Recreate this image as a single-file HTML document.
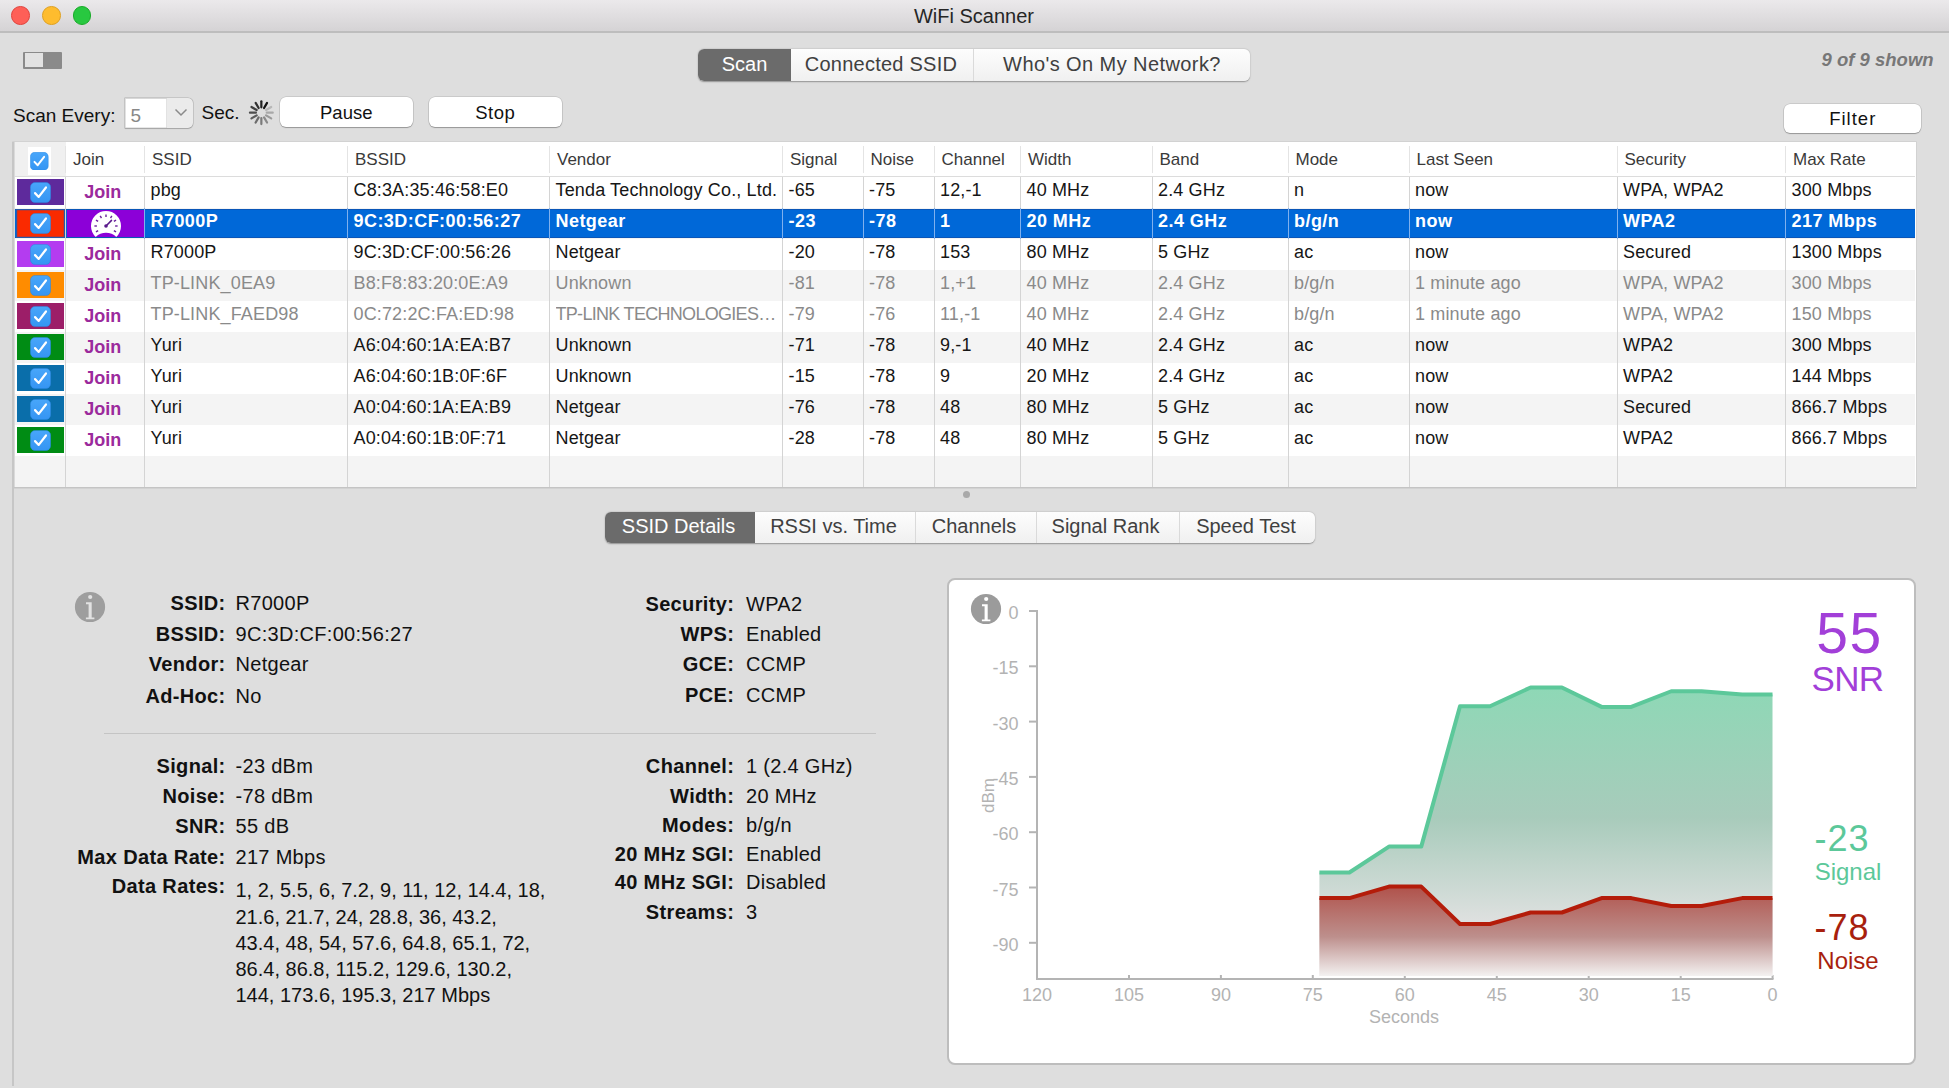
<!DOCTYPE html><html><head><meta charset="utf-8"><style>
*{margin:0;padding:0;box-sizing:border-box}
html,body{width:1949px;height:1088px;overflow:hidden;background:#dedede;font-family:"Liberation Sans",sans-serif;color:#111}
.a{position:absolute}
.t{position:absolute;white-space:pre}
.b{font-weight:bold}
</style></head><body>
<div class="a" style="left:0;top:0;width:1949px;height:33px;background:linear-gradient(#ebe9eb,#d5d3d5);border-bottom:2px solid #bdbdbd"></div>
<div class="a" style="left:11.1px;top:6.1px;width:18.6px;height:18.6px;border-radius:50%;background:#fe5f57;border:0.8px solid #e0443e"></div>
<div class="a" style="left:42.0px;top:6.1px;width:18.6px;height:18.6px;border-radius:50%;background:#febc2e;border:0.8px solid #dea123"></div>
<div class="a" style="left:72.9px;top:6.1px;width:18.6px;height:18.6px;border-radius:50%;background:#28c840;border:0.8px solid #1aab29"></div>
<div class="t" style="left:374.0px;width:1200px;text-align:center;top:6.07px;font-size:20px;line-height:20px;color:#262626">WiFi Scanner</div>
<div class="a" style="left:23px;top:52px;width:39px;height:17px;background:#8a8a8a;border-radius:1px"></div>
<div class="a" style="left:24.6px;top:53.4px;width:18.6px;height:14px;background:#e2e2e2"></div>
<div class="a" style="left:698px;top:49px;width:552px;height:32px;border-radius:6px;background:linear-gradient(#fdfdfd,#f0f0f0);box-shadow:0 0.5px 1.5px rgba(0,0,0,0.35)"></div>
<div class="a" style="left:698px;top:49px;width:93px;height:32px;border-radius:6px 0 0 6px;background:#6b6b6b"></div>
<div class="a" style="left:973px;top:49px;width:1px;height:32px;background:#dadada"></div>
<div class="t" style="left:144.5px;width:1200px;text-align:center;top:54.07px;font-size:20px;line-height:20px;color:#fff">Scan</div>
<div class="t" style="left:281.0px;width:1200px;text-align:center;top:54.07px;font-size:20px;line-height:20px;color:#404040;letter-spacing:0.24px">Connected SSID</div>
<div class="t" style="left:512.0px;width:1200px;text-align:center;top:54.07px;font-size:20px;line-height:20px;color:#404040;letter-spacing:0.42px">Who's On My Network?</div>
<div class="t" style="left:733.5999999999999px;width:1200px;text-align:right;top:51.04px;font-size:18.5px;line-height:18.5px;color:#777;font-weight:bold;font-style:italic">9 of 9 shown</div>
<div class="t" style="left:13px;top:106.22px;font-size:19px;line-height:19px;color:#111">Scan Every:</div>
<div class="a" style="left:125px;top:98px;width:68px;height:29.5px;border-radius:0 5px 5px 0;background:#ebebeb;box-shadow:0 0 0 0.6px rgba(0,0,0,0.18), 0 0.6px 1px rgba(0,0,0,0.18)"></div>
<div class="a" style="left:125px;top:98px;width:42px;height:29.5px;background:#fff;box-shadow:inset 0 1px 0 #d8d8d8, inset 0 0 0 0.6px #cfcfcf"></div>
<div class="t" style="left:130.5px;top:106.22px;font-size:19px;line-height:19px;color:#888">5</div>
<svg class="a" style="left:172.5px;top:105px" width="16" height="14"><path d="M2.5 4.5 L8 10 L13.5 4.5" fill="none" stroke="#8a8a8a" stroke-width="1.5"/></svg>
<div class="t" style="left:201.5px;top:102.82px;font-size:19px;line-height:19px;color:#111">Sec.</div>
<svg class="a" style="left:0;top:0" width="300" height="140"><line x1="264.05" y1="108.02" x2="267.05" y2="102.83" stroke="rgb(18,18,18)" stroke-width="2.2" stroke-linecap="round"/><line x1="261.35" y1="107.30" x2="261.35" y2="101.30" stroke="rgb(33,33,33)" stroke-width="2.2" stroke-linecap="round"/><line x1="258.65" y1="108.02" x2="255.65" y2="102.83" stroke="rgb(48,48,48)" stroke-width="2.2" stroke-linecap="round"/><line x1="256.67" y1="110.00" x2="251.48" y2="107.00" stroke="rgb(63,63,63)" stroke-width="2.2" stroke-linecap="round"/><line x1="255.95" y1="112.70" x2="249.95" y2="112.70" stroke="rgb(78,78,78)" stroke-width="2.2" stroke-linecap="round"/><line x1="256.67" y1="115.40" x2="251.48" y2="118.40" stroke="rgb(93,93,93)" stroke-width="2.2" stroke-linecap="round"/><line x1="258.65" y1="117.38" x2="255.65" y2="122.57" stroke="rgb(108,108,108)" stroke-width="2.2" stroke-linecap="round"/><line x1="261.35" y1="118.10" x2="261.35" y2="124.10" stroke="rgb(123,123,123)" stroke-width="2.2" stroke-linecap="round"/><line x1="264.05" y1="117.38" x2="267.05" y2="122.57" stroke="rgb(138,138,138)" stroke-width="2.2" stroke-linecap="round"/><line x1="266.03" y1="115.40" x2="271.22" y2="118.40" stroke="rgb(153,153,153)" stroke-width="2.2" stroke-linecap="round"/><line x1="266.75" y1="112.70" x2="272.75" y2="112.70" stroke="rgb(168,168,168)" stroke-width="2.2" stroke-linecap="round"/><line x1="266.03" y1="110.00" x2="271.22" y2="107.00" stroke="rgb(183,183,183)" stroke-width="2.2" stroke-linecap="round"/></svg>
<div class="a" style="left:279.5px;top:97px;width:133.5px;height:30px;border-radius:6px;background:#fff;box-shadow:0 0 0 0.5px rgba(0,0,0,0.18), 0 1px 1px rgba(0,0,0,0.25)"></div>
<div class="t" style="left:-253.75px;width:1200px;text-align:center;top:103.74px;font-size:18.5px;line-height:18.5px;color:#111;letter-spacing:0px">Pause</div>
<div class="a" style="left:428.5px;top:97px;width:133.0px;height:30px;border-radius:6px;background:#fff;box-shadow:0 0 0 0.5px rgba(0,0,0,0.18), 0 1px 1px rgba(0,0,0,0.25)"></div>
<div class="t" style="left:-104.75px;width:1200px;text-align:center;top:103.74px;font-size:18.5px;line-height:18.5px;color:#111;letter-spacing:0.5px">Stop</div>
<div class="a" style="left:1783.5px;top:103.5px;width:137.5px;height:29.5px;border-radius:6px;background:#fff;box-shadow:0 0 0 0.5px rgba(0,0,0,0.18), 0 1px 1px rgba(0,0,0,0.25)"></div>
<div class="t" style="left:1252.75px;width:1200px;text-align:center;top:109.54px;font-size:18.5px;line-height:18.5px;color:#111;letter-spacing:1px">Filter</div>
<div class="a" style="left:13px;top:142px;width:1903px;height:345.5px;background:#fff;box-shadow:0 0 0 0.7px #cdcdcd"></div>
<div class="a" style="left:15px;top:142px;width:50.5px;height:35px;background:#f0f0f0"></div>
<div class="a" style="left:28px;top:146.5px;width:23px;height:28px;background:#fff"></div>
<div class="a" style="left:14px;top:176px;width:1901px;height:1px;background:#dcdcdc"></div>
<div class="a" style="left:14px;top:177px;width:1901px;height:31px;background:#ffffff"></div>
<div class="a" style="left:14px;top:208px;width:1901px;height:31px;background:#f4f4f4"></div>
<div class="a" style="left:14px;top:209px;width:1901px;height:29px;background:#0068d8;box-shadow:inset 0 1px 0 #0a56b8, inset 0 -1px 0 #0a56b8"></div>
<div class="a" style="left:14px;top:239px;width:1901px;height:31px;background:#ffffff"></div>
<div class="a" style="left:14px;top:270px;width:1901px;height:31px;background:#f4f4f4"></div>
<div class="a" style="left:14px;top:301px;width:1901px;height:31px;background:#ffffff"></div>
<div class="a" style="left:14px;top:332px;width:1901px;height:31px;background:#f4f4f4"></div>
<div class="a" style="left:14px;top:363px;width:1901px;height:31px;background:#ffffff"></div>
<div class="a" style="left:14px;top:394px;width:1901px;height:31px;background:#f4f4f4"></div>
<div class="a" style="left:14px;top:425px;width:1901px;height:31px;background:#ffffff"></div>
<div class="a" style="left:14px;top:456px;width:1901px;height:31px;background:#f4f4f4"></div>
<div class="a" style="left:65.0px;top:177px;width:1px;height:310.5px;background:#d4d4d4"></div>
<div class="a" style="left:65.0px;top:146px;width:1px;height:27px;background:#e4e4e4"></div>
<div class="a" style="left:144.0px;top:177px;width:1px;height:310.5px;background:#d4d4d4"></div>
<div class="a" style="left:144.0px;top:146px;width:1px;height:27px;background:#e4e4e4"></div>
<div class="a" style="left:347.0px;top:177px;width:1px;height:310.5px;background:#d4d4d4"></div>
<div class="a" style="left:347.0px;top:146px;width:1px;height:27px;background:#e4e4e4"></div>
<div class="a" style="left:549.0px;top:177px;width:1px;height:310.5px;background:#d4d4d4"></div>
<div class="a" style="left:549.0px;top:146px;width:1px;height:27px;background:#e4e4e4"></div>
<div class="a" style="left:782.0px;top:177px;width:1px;height:310.5px;background:#d4d4d4"></div>
<div class="a" style="left:782.0px;top:146px;width:1px;height:27px;background:#e4e4e4"></div>
<div class="a" style="left:862.5px;top:177px;width:1px;height:310.5px;background:#d4d4d4"></div>
<div class="a" style="left:862.5px;top:146px;width:1px;height:27px;background:#e4e4e4"></div>
<div class="a" style="left:933.5px;top:177px;width:1px;height:310.5px;background:#d4d4d4"></div>
<div class="a" style="left:933.5px;top:146px;width:1px;height:27px;background:#e4e4e4"></div>
<div class="a" style="left:1020.0px;top:177px;width:1px;height:310.5px;background:#d4d4d4"></div>
<div class="a" style="left:1020.0px;top:146px;width:1px;height:27px;background:#e4e4e4"></div>
<div class="a" style="left:1151.5px;top:177px;width:1px;height:310.5px;background:#d4d4d4"></div>
<div class="a" style="left:1151.5px;top:146px;width:1px;height:27px;background:#e4e4e4"></div>
<div class="a" style="left:1287.5px;top:177px;width:1px;height:310.5px;background:#d4d4d4"></div>
<div class="a" style="left:1287.5px;top:146px;width:1px;height:27px;background:#e4e4e4"></div>
<div class="a" style="left:1408.5px;top:177px;width:1px;height:310.5px;background:#d4d4d4"></div>
<div class="a" style="left:1408.5px;top:146px;width:1px;height:27px;background:#e4e4e4"></div>
<div class="a" style="left:1616.5px;top:177px;width:1px;height:310.5px;background:#d4d4d4"></div>
<div class="a" style="left:1616.5px;top:146px;width:1px;height:27px;background:#e4e4e4"></div>
<div class="a" style="left:1785.0px;top:177px;width:1px;height:310.5px;background:#d4d4d4"></div>
<div class="a" style="left:1785.0px;top:146px;width:1px;height:27px;background:#e4e4e4"></div>
<div class="a" style="left:144.0px;top:208px;width:1px;height:31px;background:#7fb0ee"></div>
<div class="a" style="left:347.0px;top:208px;width:1px;height:31px;background:#7fb0ee"></div>
<div class="a" style="left:549.0px;top:208px;width:1px;height:31px;background:#7fb0ee"></div>
<div class="a" style="left:782.0px;top:208px;width:1px;height:31px;background:#7fb0ee"></div>
<div class="a" style="left:862.5px;top:208px;width:1px;height:31px;background:#7fb0ee"></div>
<div class="a" style="left:933.5px;top:208px;width:1px;height:31px;background:#7fb0ee"></div>
<div class="a" style="left:1020.0px;top:208px;width:1px;height:31px;background:#7fb0ee"></div>
<div class="a" style="left:1151.5px;top:208px;width:1px;height:31px;background:#7fb0ee"></div>
<div class="a" style="left:1287.5px;top:208px;width:1px;height:31px;background:#7fb0ee"></div>
<div class="a" style="left:1408.5px;top:208px;width:1px;height:31px;background:#7fb0ee"></div>
<div class="a" style="left:1616.5px;top:208px;width:1px;height:31px;background:#7fb0ee"></div>
<div class="a" style="left:1785.0px;top:208px;width:1px;height:31px;background:#7fb0ee"></div>
<svg class="a" style="left:29.999999999999996px;top:151.5px" width="18.6" height="18.6" viewBox="0 0 20 20"><defs><linearGradient id="cbg" x1="0" y1="0" x2="0" y2="1"><stop offset="0" stop-color="#48a6fa"/><stop offset="1" stop-color="#3595f3"/></linearGradient></defs><rect x="0.4" y="0.4" width="19.2" height="19.2" rx="4.6" fill="url(#cbg)" stroke="#2a86e0" stroke-width="0.5"/><path d="M4.8 10.6 L8.3 14.2 L15.2 5.2" fill="none" stroke="#fff" stroke-width="2.1" stroke-linecap="round" stroke-linejoin="round"/></svg>
<div class="t" style="left:73.0px;top:150.61px;font-size:17px;line-height:17px;color:#3a3a3a">Join</div>
<div class="t" style="left:152.0px;top:150.61px;font-size:17px;line-height:17px;color:#3a3a3a">SSID</div>
<div class="t" style="left:355.0px;top:150.61px;font-size:17px;line-height:17px;color:#3a3a3a">BSSID</div>
<div class="t" style="left:557.0px;top:150.61px;font-size:17px;line-height:17px;color:#3a3a3a">Vendor</div>
<div class="t" style="left:790.0px;top:150.61px;font-size:17px;line-height:17px;color:#3a3a3a">Signal</div>
<div class="t" style="left:870.5px;top:150.61px;font-size:17px;line-height:17px;color:#3a3a3a">Noise</div>
<div class="t" style="left:941.5px;top:150.61px;font-size:17px;line-height:17px;color:#3a3a3a">Channel</div>
<div class="t" style="left:1028.0px;top:150.61px;font-size:17px;line-height:17px;color:#3a3a3a">Width</div>
<div class="t" style="left:1159.5px;top:150.61px;font-size:17px;line-height:17px;color:#3a3a3a">Band</div>
<div class="t" style="left:1295.5px;top:150.61px;font-size:17px;line-height:17px;color:#3a3a3a">Mode</div>
<div class="t" style="left:1416.5px;top:150.61px;font-size:17px;line-height:17px;color:#3a3a3a">Last Seen</div>
<div class="t" style="left:1624.5px;top:150.61px;font-size:17px;line-height:17px;color:#3a3a3a">Security</div>
<div class="t" style="left:1793.0px;top:150.61px;font-size:17px;line-height:17px;color:#3a3a3a">Max Rate</div>
<div class="a" style="left:17px;top:179px;width:46.5px;height:26px;background:#5e2a9c"></div>
<svg class="a" style="left:29.799999999999997px;top:182.1px" width="21" height="21" viewBox="0 0 20 20"><defs><linearGradient id="cbg" x1="0" y1="0" x2="0" y2="1"><stop offset="0" stop-color="#48a6fa"/><stop offset="1" stop-color="#3595f3"/></linearGradient></defs><rect x="0.4" y="0.4" width="19.2" height="19.2" rx="4.6" fill="url(#cbg)" stroke="#2a86e0" stroke-width="0.5"/><path d="M4.8 10.6 L8.3 14.2 L15.2 5.2" fill="none" stroke="#fff" stroke-width="2.1" stroke-linecap="round" stroke-linejoin="round"/></svg>
<div class="t" style="left:2.799999999999997px;width:200px;text-align:center;top:183.06px;font-size:18px;line-height:18px;color:#9b2a9c;font-weight:bold">Join</div>
<div class="t" style="left:150.5px;top:181.06px;font-size:18px;line-height:18px;color:#161616;letter-spacing:0.15px;">pbg</div>
<div class="t" style="left:353.5px;top:181.06px;font-size:18px;line-height:18px;color:#161616;letter-spacing:0.15px;">C8:3A:35:46:58:E0</div>
<div class="t" style="left:555.5px;top:181.06px;font-size:18px;line-height:18px;color:#161616;letter-spacing:0.15px;">Tenda Technology Co., Ltd.</div>
<div class="t" style="left:788.5px;top:181.06px;font-size:18px;line-height:18px;color:#161616;letter-spacing:0.15px;">-65</div>
<div class="t" style="left:869px;top:181.06px;font-size:18px;line-height:18px;color:#161616;letter-spacing:0.15px;">-75</div>
<div class="t" style="left:940px;top:181.06px;font-size:18px;line-height:18px;color:#161616;letter-spacing:0.15px;">12,-1</div>
<div class="t" style="left:1026.5px;top:181.06px;font-size:18px;line-height:18px;color:#161616;letter-spacing:0.15px;">40 MHz</div>
<div class="t" style="left:1158px;top:181.06px;font-size:18px;line-height:18px;color:#161616;letter-spacing:0.15px;">2.4 GHz</div>
<div class="t" style="left:1294px;top:181.06px;font-size:18px;line-height:18px;color:#161616;letter-spacing:0.15px;">n</div>
<div class="t" style="left:1415px;top:181.06px;font-size:18px;line-height:18px;color:#161616;letter-spacing:0.15px;">now</div>
<div class="t" style="left:1623px;top:181.06px;font-size:18px;line-height:18px;color:#161616;letter-spacing:0.15px;">WPA, WPA2</div>
<div class="t" style="left:1791.5px;top:181.06px;font-size:18px;line-height:18px;color:#161616;letter-spacing:0.15px;">300 Mbps</div>
<div class="a" style="left:15.5px;top:209px;width:49.5px;height:29px;background:#fa2a00;box-shadow:inset 0 0 0 1.2px #2a5aa8"></div>
<div class="a" style="left:66.5px;top:209.6px;width:77px;height:27.8px;background:#8c00d8"></div>
<svg class="a" style="left:29.799999999999997px;top:213.1px" width="21" height="21" viewBox="0 0 20 20"><defs><linearGradient id="cbg" x1="0" y1="0" x2="0" y2="1"><stop offset="0" stop-color="#48a6fa"/><stop offset="1" stop-color="#3595f3"/></linearGradient></defs><rect x="0.4" y="0.4" width="19.2" height="19.2" rx="4.6" fill="url(#cbg)" stroke="#2a86e0" stroke-width="0.5"/><path d="M4.8 10.6 L8.3 14.2 L15.2 5.2" fill="none" stroke="#fff" stroke-width="2.1" stroke-linecap="round" stroke-linejoin="round"/></svg>
<svg class="a" style="left:85.9px;top:205.9px" width="40" height="40"><path d="M9.7 30.9 A15 15 0 1 1 30.3 30.9 A15 15 0 0 0 9.7 30.9 Z" fill="#fff"/><line x1="12.12" y1="24.55" x2="9.95" y2="25.80" stroke="#6a1f9c" stroke-width="1.4"/><line x1="10.90" y1="20.00" x2="8.40" y2="20.00" stroke="#6a1f9c" stroke-width="1.4"/><line x1="12.12" y1="15.45" x2="9.95" y2="14.20" stroke="#6a1f9c" stroke-width="1.4"/><line x1="15.45" y1="12.12" x2="14.20" y2="9.95" stroke="#6a1f9c" stroke-width="1.4"/><line x1="20.00" y1="10.90" x2="20.00" y2="8.40" stroke="#6a1f9c" stroke-width="1.4"/><line x1="24.55" y1="12.12" x2="25.80" y2="9.95" stroke="#6a1f9c" stroke-width="1.4"/><line x1="27.88" y1="15.45" x2="30.05" y2="14.20" stroke="#6a1f9c" stroke-width="1.4"/><line x1="29.10" y1="20.00" x2="31.60" y2="20.00" stroke="#6a1f9c" stroke-width="1.4"/><line x1="27.88" y1="24.55" x2="30.05" y2="25.80" stroke="#6a1f9c" stroke-width="1.4"/><line x1="20" y1="20" x2="25.5" y2="14.4" stroke="#5a1a8c" stroke-width="1.5" stroke-linecap="round"/><circle cx="20" cy="20" r="1.8" fill="#5a1a8c"/></svg>
<div class="t" style="left:150.5px;top:212.06px;font-size:18px;line-height:18px;color:#fff;font-weight:bold;letter-spacing:0.45px;">R7000P</div>
<div class="t" style="left:353.5px;top:212.06px;font-size:18px;line-height:18px;color:#fff;font-weight:bold;letter-spacing:0.45px;">9C:3D:CF:00:56:27</div>
<div class="t" style="left:555.5px;top:212.06px;font-size:18px;line-height:18px;color:#fff;font-weight:bold;letter-spacing:0.45px;">Netgear</div>
<div class="t" style="left:788.5px;top:212.06px;font-size:18px;line-height:18px;color:#fff;font-weight:bold;letter-spacing:0.45px;">-23</div>
<div class="t" style="left:869px;top:212.06px;font-size:18px;line-height:18px;color:#fff;font-weight:bold;letter-spacing:0.45px;">-78</div>
<div class="t" style="left:940px;top:212.06px;font-size:18px;line-height:18px;color:#fff;font-weight:bold;letter-spacing:0.45px;">1</div>
<div class="t" style="left:1026.5px;top:212.06px;font-size:18px;line-height:18px;color:#fff;font-weight:bold;letter-spacing:0.45px;">20 MHz</div>
<div class="t" style="left:1158px;top:212.06px;font-size:18px;line-height:18px;color:#fff;font-weight:bold;letter-spacing:0.45px;">2.4 GHz</div>
<div class="t" style="left:1294px;top:212.06px;font-size:18px;line-height:18px;color:#fff;font-weight:bold;letter-spacing:0.45px;">b/g/n</div>
<div class="t" style="left:1415px;top:212.06px;font-size:18px;line-height:18px;color:#fff;font-weight:bold;letter-spacing:0.45px;">now</div>
<div class="t" style="left:1623px;top:212.06px;font-size:18px;line-height:18px;color:#fff;font-weight:bold;letter-spacing:0.45px;">WPA2</div>
<div class="t" style="left:1791.5px;top:212.06px;font-size:18px;line-height:18px;color:#fff;font-weight:bold;letter-spacing:0.45px;">217 Mbps</div>
<div class="a" style="left:17px;top:241px;width:46.5px;height:26px;background:#b43cf0"></div>
<svg class="a" style="left:29.799999999999997px;top:244.1px" width="21" height="21" viewBox="0 0 20 20"><defs><linearGradient id="cbg" x1="0" y1="0" x2="0" y2="1"><stop offset="0" stop-color="#48a6fa"/><stop offset="1" stop-color="#3595f3"/></linearGradient></defs><rect x="0.4" y="0.4" width="19.2" height="19.2" rx="4.6" fill="url(#cbg)" stroke="#2a86e0" stroke-width="0.5"/><path d="M4.8 10.6 L8.3 14.2 L15.2 5.2" fill="none" stroke="#fff" stroke-width="2.1" stroke-linecap="round" stroke-linejoin="round"/></svg>
<div class="t" style="left:2.799999999999997px;width:200px;text-align:center;top:245.06px;font-size:18px;line-height:18px;color:#9b2a9c;font-weight:bold">Join</div>
<div class="t" style="left:150.5px;top:243.06px;font-size:18px;line-height:18px;color:#161616;letter-spacing:0.15px;">R7000P</div>
<div class="t" style="left:353.5px;top:243.06px;font-size:18px;line-height:18px;color:#161616;letter-spacing:0.15px;">9C:3D:CF:00:56:26</div>
<div class="t" style="left:555.5px;top:243.06px;font-size:18px;line-height:18px;color:#161616;letter-spacing:0.15px;">Netgear</div>
<div class="t" style="left:788.5px;top:243.06px;font-size:18px;line-height:18px;color:#161616;letter-spacing:0.15px;">-20</div>
<div class="t" style="left:869px;top:243.06px;font-size:18px;line-height:18px;color:#161616;letter-spacing:0.15px;">-78</div>
<div class="t" style="left:940px;top:243.06px;font-size:18px;line-height:18px;color:#161616;letter-spacing:0.15px;">153</div>
<div class="t" style="left:1026.5px;top:243.06px;font-size:18px;line-height:18px;color:#161616;letter-spacing:0.15px;">80 MHz</div>
<div class="t" style="left:1158px;top:243.06px;font-size:18px;line-height:18px;color:#161616;letter-spacing:0.15px;">5 GHz</div>
<div class="t" style="left:1294px;top:243.06px;font-size:18px;line-height:18px;color:#161616;letter-spacing:0.15px;">ac</div>
<div class="t" style="left:1415px;top:243.06px;font-size:18px;line-height:18px;color:#161616;letter-spacing:0.15px;">now</div>
<div class="t" style="left:1623px;top:243.06px;font-size:18px;line-height:18px;color:#161616;letter-spacing:0.15px;">Secured</div>
<div class="t" style="left:1791.5px;top:243.06px;font-size:18px;line-height:18px;color:#161616;letter-spacing:0.15px;">1300 Mbps</div>
<div class="a" style="left:17px;top:272px;width:46.5px;height:26px;background:#ff8c00"></div>
<svg class="a" style="left:29.799999999999997px;top:275.1px" width="21" height="21" viewBox="0 0 20 20"><defs><linearGradient id="cbg" x1="0" y1="0" x2="0" y2="1"><stop offset="0" stop-color="#48a6fa"/><stop offset="1" stop-color="#3595f3"/></linearGradient></defs><rect x="0.4" y="0.4" width="19.2" height="19.2" rx="4.6" fill="url(#cbg)" stroke="#2a86e0" stroke-width="0.5"/><path d="M4.8 10.6 L8.3 14.2 L15.2 5.2" fill="none" stroke="#fff" stroke-width="2.1" stroke-linecap="round" stroke-linejoin="round"/></svg>
<div class="t" style="left:2.799999999999997px;width:200px;text-align:center;top:276.06px;font-size:18px;line-height:18px;color:#9b2a9c;font-weight:bold">Join</div>
<div class="t" style="left:150.5px;top:274.06px;font-size:18px;line-height:18px;color:#8a8a8a;letter-spacing:0.15px;">TP-LINK_0EA9</div>
<div class="t" style="left:353.5px;top:274.06px;font-size:18px;line-height:18px;color:#8a8a8a;letter-spacing:0.15px;">B8:F8:83:20:0E:A9</div>
<div class="t" style="left:555.5px;top:274.06px;font-size:18px;line-height:18px;color:#8a8a8a;letter-spacing:0.15px;">Unknown</div>
<div class="t" style="left:788.5px;top:274.06px;font-size:18px;line-height:18px;color:#8a8a8a;letter-spacing:0.15px;">-81</div>
<div class="t" style="left:869px;top:274.06px;font-size:18px;line-height:18px;color:#8a8a8a;letter-spacing:0.15px;">-78</div>
<div class="t" style="left:940px;top:274.06px;font-size:18px;line-height:18px;color:#8a8a8a;letter-spacing:0.15px;">1,+1</div>
<div class="t" style="left:1026.5px;top:274.06px;font-size:18px;line-height:18px;color:#8a8a8a;letter-spacing:0.15px;">40 MHz</div>
<div class="t" style="left:1158px;top:274.06px;font-size:18px;line-height:18px;color:#8a8a8a;letter-spacing:0.15px;">2.4 GHz</div>
<div class="t" style="left:1294px;top:274.06px;font-size:18px;line-height:18px;color:#8a8a8a;letter-spacing:0.15px;">b/g/n</div>
<div class="t" style="left:1415px;top:274.06px;font-size:18px;line-height:18px;color:#8a8a8a;letter-spacing:0.15px;">1 minute ago</div>
<div class="t" style="left:1623px;top:274.06px;font-size:18px;line-height:18px;color:#8a8a8a;letter-spacing:0.15px;">WPA, WPA2</div>
<div class="t" style="left:1791.5px;top:274.06px;font-size:18px;line-height:18px;color:#8a8a8a;letter-spacing:0.15px;">300 Mbps</div>
<div class="a" style="left:17px;top:303px;width:46.5px;height:26px;background:#9c1e68"></div>
<svg class="a" style="left:29.799999999999997px;top:306.1px" width="21" height="21" viewBox="0 0 20 20"><defs><linearGradient id="cbg" x1="0" y1="0" x2="0" y2="1"><stop offset="0" stop-color="#48a6fa"/><stop offset="1" stop-color="#3595f3"/></linearGradient></defs><rect x="0.4" y="0.4" width="19.2" height="19.2" rx="4.6" fill="url(#cbg)" stroke="#2a86e0" stroke-width="0.5"/><path d="M4.8 10.6 L8.3 14.2 L15.2 5.2" fill="none" stroke="#fff" stroke-width="2.1" stroke-linecap="round" stroke-linejoin="round"/></svg>
<div class="t" style="left:2.799999999999997px;width:200px;text-align:center;top:307.06px;font-size:18px;line-height:18px;color:#9b2a9c;font-weight:bold">Join</div>
<div class="t" style="left:150.5px;top:305.06px;font-size:18px;line-height:18px;color:#8a8a8a;letter-spacing:0.15px;">TP-LINK_FAED98</div>
<div class="t" style="left:353.5px;top:305.06px;font-size:18px;line-height:18px;color:#8a8a8a;letter-spacing:0.15px;">0C:72:2C:FA:ED:98</div>
<div class="t" style="left:555.5px;top:305.06px;font-size:18px;line-height:18px;color:#8a8a8a;letter-spacing:0.15px;width:227.0px;overflow:hidden;letter-spacing:-0.7px;">TP-LINK TECHNOLOGIES…</div>
<div class="t" style="left:788.5px;top:305.06px;font-size:18px;line-height:18px;color:#8a8a8a;letter-spacing:0.15px;">-79</div>
<div class="t" style="left:869px;top:305.06px;font-size:18px;line-height:18px;color:#8a8a8a;letter-spacing:0.15px;">-76</div>
<div class="t" style="left:940px;top:305.06px;font-size:18px;line-height:18px;color:#8a8a8a;letter-spacing:0.15px;">11,-1</div>
<div class="t" style="left:1026.5px;top:305.06px;font-size:18px;line-height:18px;color:#8a8a8a;letter-spacing:0.15px;">40 MHz</div>
<div class="t" style="left:1158px;top:305.06px;font-size:18px;line-height:18px;color:#8a8a8a;letter-spacing:0.15px;">2.4 GHz</div>
<div class="t" style="left:1294px;top:305.06px;font-size:18px;line-height:18px;color:#8a8a8a;letter-spacing:0.15px;">b/g/n</div>
<div class="t" style="left:1415px;top:305.06px;font-size:18px;line-height:18px;color:#8a8a8a;letter-spacing:0.15px;">1 minute ago</div>
<div class="t" style="left:1623px;top:305.06px;font-size:18px;line-height:18px;color:#8a8a8a;letter-spacing:0.15px;">WPA, WPA2</div>
<div class="t" style="left:1791.5px;top:305.06px;font-size:18px;line-height:18px;color:#8a8a8a;letter-spacing:0.15px;">150 Mbps</div>
<div class="a" style="left:17px;top:334px;width:46.5px;height:26px;background:#008c14"></div>
<svg class="a" style="left:29.799999999999997px;top:337.1px" width="21" height="21" viewBox="0 0 20 20"><defs><linearGradient id="cbg" x1="0" y1="0" x2="0" y2="1"><stop offset="0" stop-color="#48a6fa"/><stop offset="1" stop-color="#3595f3"/></linearGradient></defs><rect x="0.4" y="0.4" width="19.2" height="19.2" rx="4.6" fill="url(#cbg)" stroke="#2a86e0" stroke-width="0.5"/><path d="M4.8 10.6 L8.3 14.2 L15.2 5.2" fill="none" stroke="#fff" stroke-width="2.1" stroke-linecap="round" stroke-linejoin="round"/></svg>
<div class="t" style="left:2.799999999999997px;width:200px;text-align:center;top:338.06px;font-size:18px;line-height:18px;color:#9b2a9c;font-weight:bold">Join</div>
<div class="t" style="left:150.5px;top:336.06px;font-size:18px;line-height:18px;color:#161616;letter-spacing:0.15px;">Yuri</div>
<div class="t" style="left:353.5px;top:336.06px;font-size:18px;line-height:18px;color:#161616;letter-spacing:0.15px;">A6:04:60:1A:EA:B7</div>
<div class="t" style="left:555.5px;top:336.06px;font-size:18px;line-height:18px;color:#161616;letter-spacing:0.15px;">Unknown</div>
<div class="t" style="left:788.5px;top:336.06px;font-size:18px;line-height:18px;color:#161616;letter-spacing:0.15px;">-71</div>
<div class="t" style="left:869px;top:336.06px;font-size:18px;line-height:18px;color:#161616;letter-spacing:0.15px;">-78</div>
<div class="t" style="left:940px;top:336.06px;font-size:18px;line-height:18px;color:#161616;letter-spacing:0.15px;">9,-1</div>
<div class="t" style="left:1026.5px;top:336.06px;font-size:18px;line-height:18px;color:#161616;letter-spacing:0.15px;">40 MHz</div>
<div class="t" style="left:1158px;top:336.06px;font-size:18px;line-height:18px;color:#161616;letter-spacing:0.15px;">2.4 GHz</div>
<div class="t" style="left:1294px;top:336.06px;font-size:18px;line-height:18px;color:#161616;letter-spacing:0.15px;">ac</div>
<div class="t" style="left:1415px;top:336.06px;font-size:18px;line-height:18px;color:#161616;letter-spacing:0.15px;">now</div>
<div class="t" style="left:1623px;top:336.06px;font-size:18px;line-height:18px;color:#161616;letter-spacing:0.15px;">WPA2</div>
<div class="t" style="left:1791.5px;top:336.06px;font-size:18px;line-height:18px;color:#161616;letter-spacing:0.15px;">300 Mbps</div>
<div class="a" style="left:17px;top:365px;width:46.5px;height:26px;background:#0a6eaa"></div>
<svg class="a" style="left:29.799999999999997px;top:368.1px" width="21" height="21" viewBox="0 0 20 20"><defs><linearGradient id="cbg" x1="0" y1="0" x2="0" y2="1"><stop offset="0" stop-color="#48a6fa"/><stop offset="1" stop-color="#3595f3"/></linearGradient></defs><rect x="0.4" y="0.4" width="19.2" height="19.2" rx="4.6" fill="url(#cbg)" stroke="#2a86e0" stroke-width="0.5"/><path d="M4.8 10.6 L8.3 14.2 L15.2 5.2" fill="none" stroke="#fff" stroke-width="2.1" stroke-linecap="round" stroke-linejoin="round"/></svg>
<div class="t" style="left:2.799999999999997px;width:200px;text-align:center;top:369.06px;font-size:18px;line-height:18px;color:#9b2a9c;font-weight:bold">Join</div>
<div class="t" style="left:150.5px;top:367.06px;font-size:18px;line-height:18px;color:#161616;letter-spacing:0.15px;">Yuri</div>
<div class="t" style="left:353.5px;top:367.06px;font-size:18px;line-height:18px;color:#161616;letter-spacing:0.15px;">A6:04:60:1B:0F:6F</div>
<div class="t" style="left:555.5px;top:367.06px;font-size:18px;line-height:18px;color:#161616;letter-spacing:0.15px;">Unknown</div>
<div class="t" style="left:788.5px;top:367.06px;font-size:18px;line-height:18px;color:#161616;letter-spacing:0.15px;">-15</div>
<div class="t" style="left:869px;top:367.06px;font-size:18px;line-height:18px;color:#161616;letter-spacing:0.15px;">-78</div>
<div class="t" style="left:940px;top:367.06px;font-size:18px;line-height:18px;color:#161616;letter-spacing:0.15px;">9</div>
<div class="t" style="left:1026.5px;top:367.06px;font-size:18px;line-height:18px;color:#161616;letter-spacing:0.15px;">20 MHz</div>
<div class="t" style="left:1158px;top:367.06px;font-size:18px;line-height:18px;color:#161616;letter-spacing:0.15px;">2.4 GHz</div>
<div class="t" style="left:1294px;top:367.06px;font-size:18px;line-height:18px;color:#161616;letter-spacing:0.15px;">ac</div>
<div class="t" style="left:1415px;top:367.06px;font-size:18px;line-height:18px;color:#161616;letter-spacing:0.15px;">now</div>
<div class="t" style="left:1623px;top:367.06px;font-size:18px;line-height:18px;color:#161616;letter-spacing:0.15px;">WPA2</div>
<div class="t" style="left:1791.5px;top:367.06px;font-size:18px;line-height:18px;color:#161616;letter-spacing:0.15px;">144 Mbps</div>
<div class="a" style="left:17px;top:396px;width:46.5px;height:26px;background:#0a6eaa"></div>
<svg class="a" style="left:29.799999999999997px;top:399.1px" width="21" height="21" viewBox="0 0 20 20"><defs><linearGradient id="cbg" x1="0" y1="0" x2="0" y2="1"><stop offset="0" stop-color="#48a6fa"/><stop offset="1" stop-color="#3595f3"/></linearGradient></defs><rect x="0.4" y="0.4" width="19.2" height="19.2" rx="4.6" fill="url(#cbg)" stroke="#2a86e0" stroke-width="0.5"/><path d="M4.8 10.6 L8.3 14.2 L15.2 5.2" fill="none" stroke="#fff" stroke-width="2.1" stroke-linecap="round" stroke-linejoin="round"/></svg>
<div class="t" style="left:2.799999999999997px;width:200px;text-align:center;top:400.06px;font-size:18px;line-height:18px;color:#9b2a9c;font-weight:bold">Join</div>
<div class="t" style="left:150.5px;top:398.06px;font-size:18px;line-height:18px;color:#161616;letter-spacing:0.15px;">Yuri</div>
<div class="t" style="left:353.5px;top:398.06px;font-size:18px;line-height:18px;color:#161616;letter-spacing:0.15px;">A0:04:60:1A:EA:B9</div>
<div class="t" style="left:555.5px;top:398.06px;font-size:18px;line-height:18px;color:#161616;letter-spacing:0.15px;">Netgear</div>
<div class="t" style="left:788.5px;top:398.06px;font-size:18px;line-height:18px;color:#161616;letter-spacing:0.15px;">-76</div>
<div class="t" style="left:869px;top:398.06px;font-size:18px;line-height:18px;color:#161616;letter-spacing:0.15px;">-78</div>
<div class="t" style="left:940px;top:398.06px;font-size:18px;line-height:18px;color:#161616;letter-spacing:0.15px;">48</div>
<div class="t" style="left:1026.5px;top:398.06px;font-size:18px;line-height:18px;color:#161616;letter-spacing:0.15px;">80 MHz</div>
<div class="t" style="left:1158px;top:398.06px;font-size:18px;line-height:18px;color:#161616;letter-spacing:0.15px;">5 GHz</div>
<div class="t" style="left:1294px;top:398.06px;font-size:18px;line-height:18px;color:#161616;letter-spacing:0.15px;">ac</div>
<div class="t" style="left:1415px;top:398.06px;font-size:18px;line-height:18px;color:#161616;letter-spacing:0.15px;">now</div>
<div class="t" style="left:1623px;top:398.06px;font-size:18px;line-height:18px;color:#161616;letter-spacing:0.15px;">Secured</div>
<div class="t" style="left:1791.5px;top:398.06px;font-size:18px;line-height:18px;color:#161616;letter-spacing:0.15px;">866.7 Mbps</div>
<div class="a" style="left:17px;top:427px;width:46.5px;height:26px;background:#008c14"></div>
<svg class="a" style="left:29.799999999999997px;top:430.1px" width="21" height="21" viewBox="0 0 20 20"><defs><linearGradient id="cbg" x1="0" y1="0" x2="0" y2="1"><stop offset="0" stop-color="#48a6fa"/><stop offset="1" stop-color="#3595f3"/></linearGradient></defs><rect x="0.4" y="0.4" width="19.2" height="19.2" rx="4.6" fill="url(#cbg)" stroke="#2a86e0" stroke-width="0.5"/><path d="M4.8 10.6 L8.3 14.2 L15.2 5.2" fill="none" stroke="#fff" stroke-width="2.1" stroke-linecap="round" stroke-linejoin="round"/></svg>
<div class="t" style="left:2.799999999999997px;width:200px;text-align:center;top:431.06px;font-size:18px;line-height:18px;color:#9b2a9c;font-weight:bold">Join</div>
<div class="t" style="left:150.5px;top:429.06px;font-size:18px;line-height:18px;color:#161616;letter-spacing:0.15px;">Yuri</div>
<div class="t" style="left:353.5px;top:429.06px;font-size:18px;line-height:18px;color:#161616;letter-spacing:0.15px;">A0:04:60:1B:0F:71</div>
<div class="t" style="left:555.5px;top:429.06px;font-size:18px;line-height:18px;color:#161616;letter-spacing:0.15px;">Netgear</div>
<div class="t" style="left:788.5px;top:429.06px;font-size:18px;line-height:18px;color:#161616;letter-spacing:0.15px;">-28</div>
<div class="t" style="left:869px;top:429.06px;font-size:18px;line-height:18px;color:#161616;letter-spacing:0.15px;">-78</div>
<div class="t" style="left:940px;top:429.06px;font-size:18px;line-height:18px;color:#161616;letter-spacing:0.15px;">48</div>
<div class="t" style="left:1026.5px;top:429.06px;font-size:18px;line-height:18px;color:#161616;letter-spacing:0.15px;">80 MHz</div>
<div class="t" style="left:1158px;top:429.06px;font-size:18px;line-height:18px;color:#161616;letter-spacing:0.15px;">5 GHz</div>
<div class="t" style="left:1294px;top:429.06px;font-size:18px;line-height:18px;color:#161616;letter-spacing:0.15px;">ac</div>
<div class="t" style="left:1415px;top:429.06px;font-size:18px;line-height:18px;color:#161616;letter-spacing:0.15px;">now</div>
<div class="t" style="left:1623px;top:429.06px;font-size:18px;line-height:18px;color:#161616;letter-spacing:0.15px;">WPA2</div>
<div class="t" style="left:1791.5px;top:429.06px;font-size:18px;line-height:18px;color:#161616;letter-spacing:0.15px;">866.7 Mbps</div>
<div class="a" style="left:13px;top:487px;width:1903px;height:1px;background:#c4c4c4"></div>
<div class="a" style="left:14px;top:142px;width:1px;height:345px;background:#dadada"></div>
<div class="a" style="left:962.5px;top:490.5px;width:7px;height:7px;border-radius:50%;background:#a9a9a9"></div>
<div class="a" style="left:12px;top:142px;width:2px;height:944px;background:#c6c6c6"></div>
<div class="a" style="left:605px;top:511.5px;width:710px;height:31.5px;border-radius:6px;background:linear-gradient(#fdfdfd,#f0f0f0);box-shadow:0 0.5px 1.5px rgba(0,0,0,0.35)"></div>
<div class="a" style="left:605px;top:511.5px;width:150px;height:31.5px;border-radius:6px 0 0 6px;background:#6b6b6b"></div>
<div class="a" style="left:915.4px;top:511.5px;width:1px;height:31.5px;background:#dadada"></div>
<div class="a" style="left:1036.3px;top:511.5px;width:1px;height:31.5px;background:#dadada"></div>
<div class="a" style="left:1178.7px;top:511.5px;width:1px;height:31.5px;background:#dadada"></div>
<div class="t" style="left:78.5px;width:1200px;text-align:center;top:516.47px;font-size:20px;line-height:20px;color:#fff">SSID Details</div>
<div class="t" style="left:233.5px;width:1200px;text-align:center;top:516.47px;font-size:20px;line-height:20px;color:#404040">RSSI vs. Time</div>
<div class="t" style="left:374.0px;width:1200px;text-align:center;top:516.47px;font-size:20px;line-height:20px;color:#404040">Channels</div>
<div class="t" style="left:505.5px;width:1200px;text-align:center;top:516.47px;font-size:20px;line-height:20px;color:#404040">Signal Rank</div>
<div class="t" style="left:646.0px;width:1200px;text-align:center;top:516.47px;font-size:20px;line-height:20px;color:#404040">Speed Test</div>
<svg class="a" style="left:73.5px;top:591px" width="32" height="32"><circle cx="16" cy="16" r="15.1" fill="#9e9e9e"/><circle cx="16.2" cy="6" r="2.1" fill="#e2e2e2"/><path d="M12 11.2 H17.7 V26.4 H20.4 V28.2 H11.9 V26.4 H14.6 V13.2 H12 Z" fill="#e2e2e2"/></svg>
<div class="t" style="left:-974.4px;width:1200px;text-align:right;top:593.27px;font-size:20px;line-height:20px;font-weight:bold;color:#111;letter-spacing:0.35px">SSID:</div>
<div class="t" style="left:235.5px;top:593.27px;font-size:20px;line-height:20px;color:#111;letter-spacing:0.3px">R7000P</div>
<div class="t" style="left:-974.4px;width:1200px;text-align:right;top:623.87px;font-size:20px;line-height:20px;font-weight:bold;color:#111;letter-spacing:0.35px">BSSID:</div>
<div class="t" style="left:235.5px;top:623.87px;font-size:20px;line-height:20px;color:#111;letter-spacing:0.3px">9C:3D:CF:00:56:27</div>
<div class="t" style="left:-974.4px;width:1200px;text-align:right;top:653.77px;font-size:20px;line-height:20px;font-weight:bold;color:#111;letter-spacing:0.35px">Vendor:</div>
<div class="t" style="left:235.5px;top:653.77px;font-size:20px;line-height:20px;color:#111;letter-spacing:0.3px">Netgear</div>
<div class="t" style="left:-974.4px;width:1200px;text-align:right;top:685.87px;font-size:20px;line-height:20px;font-weight:bold;color:#111;letter-spacing:0.35px">Ad-Hoc:</div>
<div class="t" style="left:235.5px;top:685.87px;font-size:20px;line-height:20px;color:#111;letter-spacing:0.3px">No</div>
<div class="t" style="left:-465.79999999999995px;width:1200px;text-align:right;top:593.57px;font-size:20px;line-height:20px;font-weight:bold;color:#111;letter-spacing:0.35px">Security:</div>
<div class="t" style="left:746px;top:593.57px;font-size:20px;line-height:20px;color:#111;letter-spacing:0.3px">WPA2</div>
<div class="t" style="left:-465.79999999999995px;width:1200px;text-align:right;top:624.07px;font-size:20px;line-height:20px;font-weight:bold;color:#111;letter-spacing:0.35px">WPS:</div>
<div class="t" style="left:746px;top:624.07px;font-size:20px;line-height:20px;color:#111;letter-spacing:0.3px">Enabled</div>
<div class="t" style="left:-465.79999999999995px;width:1200px;text-align:right;top:654.07px;font-size:20px;line-height:20px;font-weight:bold;color:#111;letter-spacing:0.35px">GCE:</div>
<div class="t" style="left:746px;top:654.07px;font-size:20px;line-height:20px;color:#111;letter-spacing:0.3px">CCMP</div>
<div class="t" style="left:-465.79999999999995px;width:1200px;text-align:right;top:685.27px;font-size:20px;line-height:20px;font-weight:bold;color:#111;letter-spacing:0.35px">PCE:</div>
<div class="t" style="left:746px;top:685.27px;font-size:20px;line-height:20px;color:#111;letter-spacing:0.3px">CCMP</div>
<div class="a" style="left:104px;top:732.5px;width:772px;height:1px;background:#c4c4c4"></div>
<div class="t" style="left:-974.4px;width:1200px;text-align:right;top:755.87px;font-size:20px;line-height:20px;font-weight:bold;color:#111;letter-spacing:0.35px">Signal:</div>
<div class="t" style="left:235.5px;top:755.87px;font-size:20px;line-height:20px;color:#111;letter-spacing:0.3px">-23 dBm</div>
<div class="t" style="left:-974.4px;width:1200px;text-align:right;top:786.27px;font-size:20px;line-height:20px;font-weight:bold;color:#111;letter-spacing:0.35px">Noise:</div>
<div class="t" style="left:235.5px;top:786.27px;font-size:20px;line-height:20px;color:#111;letter-spacing:0.3px">-78 dBm</div>
<div class="t" style="left:-974.4px;width:1200px;text-align:right;top:816.37px;font-size:20px;line-height:20px;font-weight:bold;color:#111;letter-spacing:0.35px">SNR:</div>
<div class="t" style="left:235.5px;top:816.37px;font-size:20px;line-height:20px;color:#111;letter-spacing:0.3px">55 dB</div>
<div class="t" style="left:-974.4px;width:1200px;text-align:right;top:846.97px;font-size:20px;line-height:20px;font-weight:bold;color:#111;letter-spacing:0.35px">Max Data Rate:</div>
<div class="t" style="left:235.5px;top:846.97px;font-size:20px;line-height:20px;color:#111;letter-spacing:0.3px">217 Mbps</div>
<div class="t" style="left:-974.4px;width:1200px;text-align:right;top:876.27px;font-size:20px;line-height:20px;font-weight:bold;color:#111;letter-spacing:0.35px">Data Rates:</div>
<div class="t" style="left:235.5px;top:880.27px;font-size:20px;line-height:20px;color:#111">1, 2, 5.5, 6, 7.2, 9, 11, 12, 14.4, 18,</div>
<div class="t" style="left:235.5px;top:906.97px;font-size:20px;line-height:20px;color:#111">21.6, 21.7, 24, 28.8, 36, 43.2,</div>
<div class="t" style="left:235.5px;top:932.77px;font-size:20px;line-height:20px;color:#111">43.4, 48, 54, 57.6, 64.8, 65.1, 72,</div>
<div class="t" style="left:235.5px;top:958.97px;font-size:20px;line-height:20px;color:#111">86.4, 86.8, 115.2, 129.6, 130.2,</div>
<div class="t" style="left:235.5px;top:985.07px;font-size:20px;line-height:20px;color:#111">144, 173.6, 195.3, 217 Mbps</div>
<div class="t" style="left:-465.79999999999995px;width:1200px;text-align:right;top:756.07px;font-size:20px;line-height:20px;font-weight:bold;color:#111;letter-spacing:0.35px">Channel:</div>
<div class="t" style="left:746px;top:756.07px;font-size:20px;line-height:20px;color:#111;letter-spacing:0.3px">1 (2.4 GHz)</div>
<div class="t" style="left:-465.79999999999995px;width:1200px;text-align:right;top:785.87px;font-size:20px;line-height:20px;font-weight:bold;color:#111;letter-spacing:0.35px">Width:</div>
<div class="t" style="left:746px;top:785.87px;font-size:20px;line-height:20px;color:#111;letter-spacing:0.3px">20 MHz</div>
<div class="t" style="left:-465.79999999999995px;width:1200px;text-align:right;top:815.47px;font-size:20px;line-height:20px;font-weight:bold;color:#111;letter-spacing:0.35px">Modes:</div>
<div class="t" style="left:746px;top:815.47px;font-size:20px;line-height:20px;color:#111;letter-spacing:0.3px">b/g/n</div>
<div class="t" style="left:-465.79999999999995px;width:1200px;text-align:right;top:844.37px;font-size:20px;line-height:20px;font-weight:bold;color:#111;letter-spacing:0.35px">20 MHz SGI:</div>
<div class="t" style="left:746px;top:844.37px;font-size:20px;line-height:20px;color:#111;letter-spacing:0.3px">Enabled</div>
<div class="t" style="left:-465.79999999999995px;width:1200px;text-align:right;top:872.37px;font-size:20px;line-height:20px;font-weight:bold;color:#111;letter-spacing:0.35px">40 MHz SGI:</div>
<div class="t" style="left:746px;top:872.37px;font-size:20px;line-height:20px;color:#111;letter-spacing:0.3px">Disabled</div>
<div class="t" style="left:-465.79999999999995px;width:1200px;text-align:right;top:902.27px;font-size:20px;line-height:20px;font-weight:bold;color:#111;letter-spacing:0.35px">Streams:</div>
<div class="t" style="left:746px;top:902.27px;font-size:20px;line-height:20px;color:#111;letter-spacing:0.3px">3</div>
<div class="a" style="left:947px;top:578px;width:969px;height:487px;border-radius:8px;background:#fff;border:2px solid #bdbdbd"></div>
<svg class="a" style="left:970.4px;top:592.8px" width="32" height="32"><circle cx="16" cy="16" r="15.1" fill="#9b9b9b"/><circle cx="16.2" cy="6" r="2.1" fill="#fff"/><path d="M12 11.2 H17.7 V26.4 H20.4 V28.2 H11.9 V26.4 H14.6 V13.2 H12 Z" fill="#fff"/></svg>
<svg class="a" style="left:0;top:0" width="1949" height="1088"><line x1="1037" y1="610" x2="1037" y2="979" stroke="#b4b4b4" stroke-width="2"/><line x1="1036" y1="979" x2="1773.5" y2="979" stroke="#b4b4b4" stroke-width="2"/><line x1="1029" y1="611.0" x2="1037" y2="611.0" stroke="#b4b4b4" stroke-width="2"/><text x="1018.5" y="619.0" text-anchor="end" font-size="18" fill="#b3b3b3" font-family="Liberation Sans">0</text><line x1="1029" y1="666.3" x2="1037" y2="666.3" stroke="#b4b4b4" stroke-width="2"/><text x="1018.5" y="674.3" text-anchor="end" font-size="18" fill="#b3b3b3" font-family="Liberation Sans">-15</text><line x1="1029" y1="721.6" x2="1037" y2="721.6" stroke="#b4b4b4" stroke-width="2"/><text x="1018.5" y="729.6" text-anchor="end" font-size="18" fill="#b3b3b3" font-family="Liberation Sans">-30</text><line x1="1029" y1="776.9" x2="1037" y2="776.9" stroke="#b4b4b4" stroke-width="2"/><text x="1018.5" y="784.9" text-anchor="end" font-size="18" fill="#b3b3b3" font-family="Liberation Sans">-45</text><line x1="1029" y1="832.2" x2="1037" y2="832.2" stroke="#b4b4b4" stroke-width="2"/><text x="1018.5" y="840.2" text-anchor="end" font-size="18" fill="#b3b3b3" font-family="Liberation Sans">-60</text><line x1="1029" y1="887.5" x2="1037" y2="887.5" stroke="#b4b4b4" stroke-width="2"/><text x="1018.5" y="895.5" text-anchor="end" font-size="18" fill="#b3b3b3" font-family="Liberation Sans">-75</text><line x1="1029" y1="942.8" x2="1037" y2="942.8" stroke="#b4b4b4" stroke-width="2"/><text x="1018.5" y="950.8" text-anchor="end" font-size="18" fill="#b3b3b3" font-family="Liberation Sans">-90</text><line x1="1037.0" y1="975" x2="1037.0" y2="979" stroke="#b4b4b4" stroke-width="2"/><text x="1037.0" y="1001" text-anchor="middle" font-size="18" fill="#b3b3b3" font-family="Liberation Sans">120</text><line x1="1129.0" y1="975" x2="1129.0" y2="979" stroke="#b4b4b4" stroke-width="2"/><text x="1129.0" y="1001" text-anchor="middle" font-size="18" fill="#b3b3b3" font-family="Liberation Sans">105</text><line x1="1220.9" y1="975" x2="1220.9" y2="979" stroke="#b4b4b4" stroke-width="2"/><text x="1220.9" y="1001" text-anchor="middle" font-size="18" fill="#b3b3b3" font-family="Liberation Sans">90</text><line x1="1312.8" y1="975" x2="1312.8" y2="979" stroke="#b4b4b4" stroke-width="2"/><text x="1312.8" y="1001" text-anchor="middle" font-size="18" fill="#b3b3b3" font-family="Liberation Sans">75</text><line x1="1404.8" y1="975" x2="1404.8" y2="979" stroke="#b4b4b4" stroke-width="2"/><text x="1404.8" y="1001" text-anchor="middle" font-size="18" fill="#b3b3b3" font-family="Liberation Sans">60</text><line x1="1496.8" y1="975" x2="1496.8" y2="979" stroke="#b4b4b4" stroke-width="2"/><text x="1496.8" y="1001" text-anchor="middle" font-size="18" fill="#b3b3b3" font-family="Liberation Sans">45</text><line x1="1588.7" y1="975" x2="1588.7" y2="979" stroke="#b4b4b4" stroke-width="2"/><text x="1588.7" y="1001" text-anchor="middle" font-size="18" fill="#b3b3b3" font-family="Liberation Sans">30</text><line x1="1680.7" y1="975" x2="1680.7" y2="979" stroke="#b4b4b4" stroke-width="2"/><text x="1680.7" y="1001" text-anchor="middle" font-size="18" fill="#b3b3b3" font-family="Liberation Sans">15</text><line x1="1772.6" y1="975" x2="1772.6" y2="979" stroke="#b4b4b4" stroke-width="2"/><text x="1772.6" y="1001" text-anchor="middle" font-size="18" fill="#b3b3b3" font-family="Liberation Sans">0</text><text x="1404" y="1023" text-anchor="middle" font-size="18" fill="#b3b3b3" font-family="Liberation Sans">Seconds</text><text transform="translate(994,795.5) rotate(-90)" text-anchor="middle" font-size="17" fill="#b3b3b3" font-family="Liberation Sans">dBm</text><defs><linearGradient id="gs" x1="0" y1="687" x2="0" y2="978" gradientUnits="userSpaceOnUse"><stop offset="0" stop-color="#8ed8b6"/><stop offset="0.45" stop-color="#a8cbbb"/><stop offset="0.8" stop-color="#dde0df"/><stop offset="1" stop-color="#f4f4f4"/></linearGradient><linearGradient id="gn" x1="0" y1="886" x2="0" y2="978" gradientUnits="userSpaceOnUse"><stop offset="0" stop-color="#b0514a"/><stop offset="0.55" stop-color="#bd8f8c"/><stop offset="1" stop-color="#f6f6f6"/></linearGradient></defs><polygon points="1319.4,976 1319.4,872.5 1349.4,872.5 1389,846.6 1421.25,846.6 1460,706.25 1490,706.25 1530.6,687.5 1561.9,687.5 1601.6,706.9 1631.25,706.9 1671.25,691.25 1701.6,691.25 1742.2,694.4 1772.5,694.4 1772.5,976" fill="url(#gs)"/><polygon points="1319.4,976 1319.4,898.1 1349.4,898.1 1389,886.6 1421.25,886.6 1460,924 1490,924 1530.6,912.5 1561.9,912.5 1601.6,898.1 1631.25,898.1 1671.25,906 1701.6,906 1742.2,898.1 1772.5,898.1 1772.5,976" fill="url(#gn)"/><polyline points="1319.4,872.5 1349.4,872.5 1389,846.6 1421.25,846.6 1460,706.25 1490,706.25 1530.6,687.5 1561.9,687.5 1601.6,706.9 1631.25,706.9 1671.25,691.25 1701.6,691.25 1742.2,694.4 1772.5,694.4" fill="none" stroke="#5cc89a" stroke-width="4" stroke-linejoin="round"/><polyline points="1319.4,898.1 1349.4,898.1 1389,886.6 1421.25,886.6 1460,924 1490,924 1530.6,912.5 1561.9,912.5 1601.6,898.1 1631.25,898.1 1671.25,906 1701.6,906 1742.2,898.1 1772.5,898.1" fill="none" stroke="#b41c0a" stroke-width="4" stroke-linejoin="round"/></svg>
<div class="t" style="left:1699.5px;width:300px;text-align:center;top:605.25px;font-size:57px;line-height:57px;color:#a23fd8;letter-spacing:1.5px">55</div>
<div class="t" style="left:1697.5px;width:300px;text-align:center;top:661.37px;font-size:35px;line-height:35px;color:#a23fd8;letter-spacing:-0.6px">SNR</div>
<div class="t" style="left:1692.0px;width:300px;text-align:center;top:820.83px;font-size:36px;line-height:36px;color:#5cc89a;letter-spacing:1px">-23</div>
<div class="t" style="left:1698.0px;width:300px;text-align:center;top:859.68px;font-size:24px;line-height:24px;color:#5cc89a">Signal</div>
<div class="t" style="left:1692.0px;width:300px;text-align:center;top:909.93px;font-size:36px;line-height:36px;color:#a81f0e;letter-spacing:1px">-78</div>
<div class="t" style="left:1698.0px;width:300px;text-align:center;top:948.68px;font-size:24px;line-height:24px;color:#a81f0e">Noise</div>
</body></html>
